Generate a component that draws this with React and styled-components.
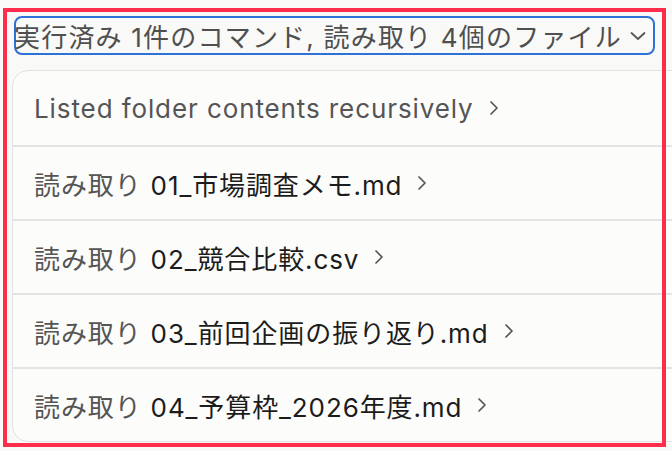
import React from 'react';
import styled, { createGlobalStyle } from 'styled-components';

const GlobalStyle = createGlobalStyle`
    html, body {
        margin: 0;
        padding: 0;
        background: #f9f9f8;
        overflow: hidden;
    }
    body {
        font-family: Inter, "Noto Sans CJK JP", sans-serif;
    }
`

const rows = [
    { label: 'Listed folder contents recursively' },
    { verb: '読み取り', file: '01_市場調査メモ.md' },
    { verb: '読み取り', file: '02_競合比較.csv' },
    { verb: '読み取り', file: '03_前回企画の振り返り.md' },
    { verb: '読み取り', file: '04_予算枠_2026年度.md' },
]

export default function App () {
    return (
        <>
            <GlobalStyle />
            <Page>
                <Summary type='button'>
                    <SummaryText>実行済み 1件のコマンド, 読み取り 4個のファイル</SummaryText>
                    <svg width="18" height="18" viewBox="0 0 18 18" fill="none">
                        <path d="M2.5 6 L9 12 L15.5 6" stroke="#555" strokeWidth="1.8" strokeLinecap="round" strokeLinejoin="round" />
                    </svg>
                </Summary>

                <Card>
                    {rows.map((row, i) => (
                        <Row key={i}>
                            {row.label
                                ? <Muted>{row.label}</Muted>
                                : <>
                                    <Muted>{row.verb}</Muted>
                                    <FileName>{row.file}</FileName>
                                  </>
                            }
                            <svg width="10" height="16" viewBox="0 0 10 16" fill="none">
                                <path d="M2 2 L8 8 L2 14" stroke="#555" strokeWidth="1.7" strokeLinecap="round" strokeLinejoin="round" />
                            </svg>
                        </Row>
                    ))}
                </Card>

                <Highlight />
            </Page>
        </>
    )
}

const Page = styled.div`
    position: relative;
    height: 451px;
    padding: 16px 0 0 12px;
    box-sizing: border-box;
`

const Summary = styled.button`
    display: flex;
    align-items: center;
    justify-content: space-between;
    width: 641px;
    height: 39px;
    margin-left: 2px;
    padding: 0 6px 0 0;
    box-sizing: border-box;
    background: transparent;
    border: 2px solid #2e72d8;
    border-radius: 8px;
    font-family: inherit;
    cursor: pointer;
`

const SummaryText = styled.span`
    font-size: 26px;
    color: #4f4f4f;
    white-space: nowrap;
    margin-left: -2px;
    letter-spacing: 1.2px;
`

const Card = styled.div`
    margin-top: 15px;
    margin-right: -30px;
    background: #fcfcfb;
    border: 1.5px solid #e2e2e2;
    border-radius: 16px;
    overflow: hidden;
`

const Row = styled.div`
    display: flex;
    align-items: center;
    gap: 9px;
    height: 74px;
    padding-left: 21px;
    box-sizing: border-box;
    font-size: 26px;
    letter-spacing: 0.9px;
    white-space: nowrap;

    & + & {
        border-top: 2px solid #e4e4e4;
    }

    svg {
        margin-left: 6px;
    }
`

const Muted = styled.span`
    color: #555555;
`

const FileName = styled.span`
    color: #1c1c1c;
`

const Highlight = styled.div`
    position: absolute;
    left: 3px;
    top: 8px;
    width: 663px;
    height: 439px;
    box-sizing: border-box;
    border: 4px solid #fd2d4b;
    pointer-events: none;
`
